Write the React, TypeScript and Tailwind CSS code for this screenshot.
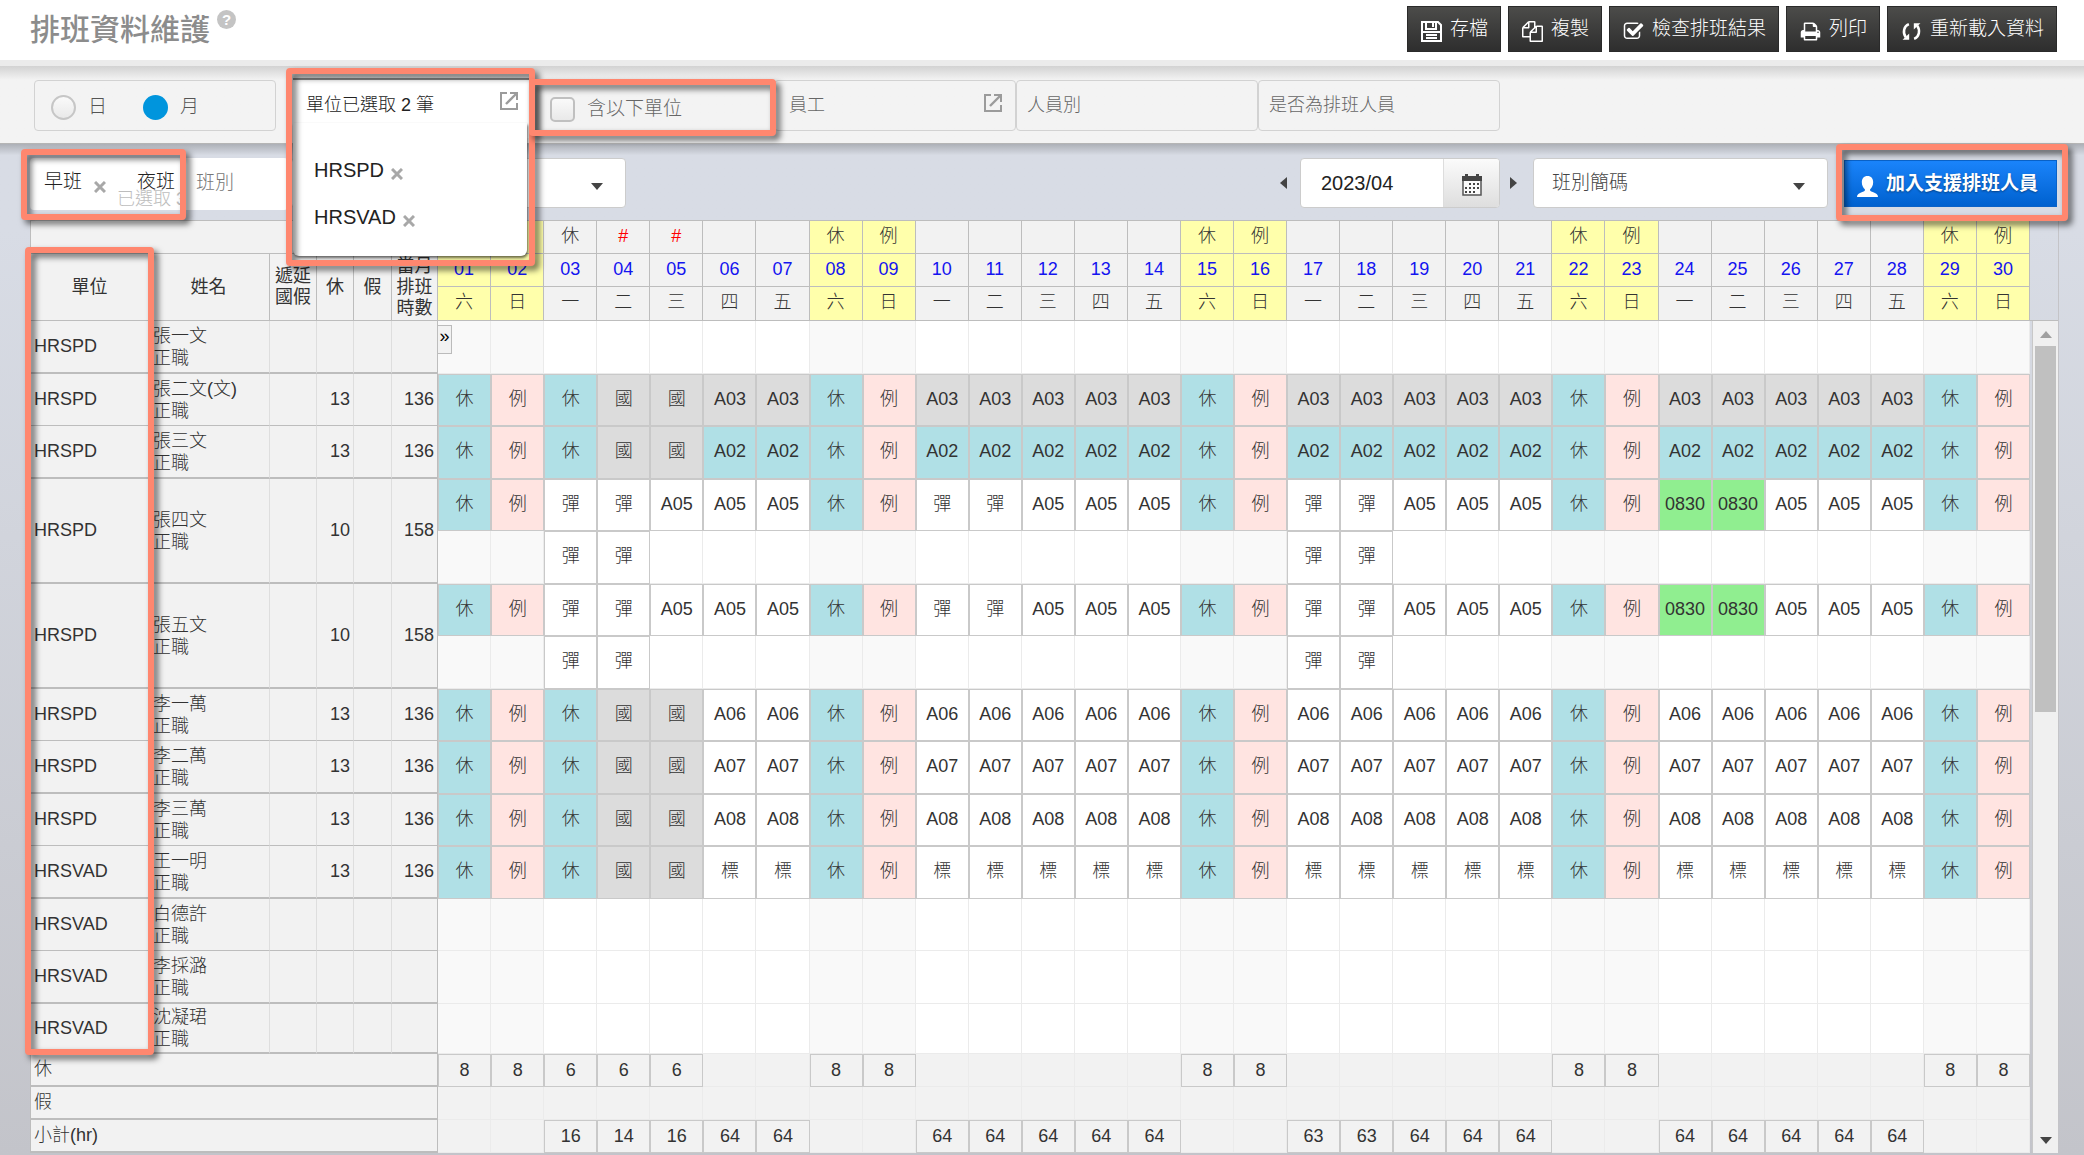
import React from 'react';

const DAYS = Array.from({ length: 30 }, (_, i) => i + 1);
const WEEK = ['六', '日', '一', '二', '三', '四', '五'];
const weekday = (d: number) => WEEK[(d - 1) % 7];
const isSat = (d: number) => weekday(d) === '六';
const isSun = (d: number) => weekday(d) === '日';
const isWeekend = (d: number) => isSat(d) || isSun(d);

const topLabel = (d: number) => {
  if (isSat(d) || d === 3) return '休';
  if (isSun(d)) return '例';
  if (d === 4 || d === 5) return '#';
  return '';
};

type Cell = { text: string; tone: string };

const TONES: Record<string, string> = {
  teal: 'bg-[#b0e0e6]',
  rose: 'bg-[#ffe4e1]',
  gray: 'bg-[#dcdcdc]',
  green: 'bg-[#90ee90]',
  white: 'bg-white',
};

type Person = {
  unit: string;
  name: string;
  off?: number;
  hours?: number;
  code?: string;
  tone?: string;
  flex?: boolean;
};

const PEOPLE: Person[] = [
  { unit: 'HRSPD', name: '張一文' },
  { unit: 'HRSPD', name: '張二文(文)', off: 13, hours: 136, code: 'A03', tone: 'gray' },
  { unit: 'HRSPD', name: '張三文', off: 13, hours: 136, code: 'A02', tone: 'teal' },
  { unit: 'HRSPD', name: '張四文', off: 10, hours: 158, code: 'A05', flex: true },
  { unit: 'HRSPD', name: '張五文', off: 10, hours: 158, code: 'A05', flex: true },
  { unit: 'HRSPD', name: '李一萬', off: 13, hours: 136, code: 'A06' },
  { unit: 'HRSPD', name: '李二萬', off: 13, hours: 136, code: 'A07' },
  { unit: 'HRSPD', name: '李三萬', off: 13, hours: 136, code: 'A08' },
  { unit: 'HRSVAD', name: '王一明', off: 13, hours: 136, code: '標' },
  { unit: 'HRSVAD', name: '白德許' },
  { unit: 'HRSVAD', name: '李採潞' },
  { unit: 'HRSVAD', name: '沈凝珺' },
];

function shiftOf(p: Person, d: number): Cell | null {
  if (!p.code) return null;
  if (isSat(d)) return { text: '休', tone: 'teal' };
  if (isSun(d)) return { text: '例', tone: 'rose' };
  if (p.flex) {
    if ([3, 4, 10, 11, 17, 18].includes(d)) return { text: '彈', tone: 'white' };
    if (d === 24 || d === 25) return { text: '0830', tone: 'green' };
    return { text: p.code, tone: 'white' };
  }
  if (d === 3) return { text: '休', tone: 'teal' };
  if (d === 4 || d === 5) return { text: '國', tone: 'gray' };
  return { text: p.code, tone: p.tone ?? 'white' };
}

const secondShift = (d: number): Cell | null =>
  [3, 4, 17, 18].includes(d) ? { text: '彈', tone: 'white' } : null;

const offTotal = (d: number) => (isWeekend(d) ? '8' : [3, 4, 5].includes(d) ? '6' : '');
const hourTotal = (d: number) => {
  if (isWeekend(d)) return '';
  if (d === 3 || d === 5) return '16';
  if (d === 4) return '14';
  if (d === 17 || d === 18) return '63';
  return '64';
};

function DayCell({ cell, day }: { cell: Cell | null; day: number }) {
  if (cell) {
    return (
      <td className={`border border-[#c9c9c9] px-0 pt-0 pb-0.5 text-center ${TONES[cell.tone]}`}>{cell.text}</td>
    );
  }
  return <td className={`border-r border-b border-[#ebebeb] p-0 ${isWeekend(day) ? 'bg-[#f9f9f9]' : 'bg-white'}`} />;
}

function Frame({ className }: { className: string }) {
  return (
    <span
      aria-hidden="true"
      className={`pointer-events-none absolute z-30 rounded-[4px] border-[6px] border-[#ff876f] drop-shadow-[4px_4px_3px_rgba(0,0,0,0.6)] ${className}`}
    />
  );
}

function Cross() {
  return (
    <svg viewBox="0 0 12 12" className="size-3" stroke="#a8a8a8" strokeWidth="3" aria-hidden="true">
      <path d="M1 1l10 10M11 1L1 11" />
    </svg>
  );
}

function OpenIcon() {
  return (
    <svg viewBox="0 0 20 20" className="size-5" fill="none" stroke="#9b9b9b" strokeWidth="2" aria-hidden="true">
      <path d="M8 2H2v16h16v-6M11 2h7v7" />
      <path d="M17 3L7 13" strokeWidth="2.4" />
    </svg>
  );
}

function Caret() {
  return (
    <svg viewBox="0 0 12 7" className="pointer-events-none absolute top-1/2 right-[23px] h-[7px] w-3" fill="#444" aria-hidden="true">
      <path d="M0 0h12L6 7z" />
    </svg>
  );
}

const COPY =
  'M1696 384q40 0 68 28t28 68v1216q0 40-28 68t-68 28h-960q-40 0-68-28t-28-68v-288h-544q-40 0-68-28t-28-68v-672q0-40 20-88t48-76l408-408q28-28 76-48t88-20h416q40 0 68 28t28 68v328q68-40 128-40h416zm-544 213l-299 299h299v-299zm-640-384l-299 299h299v-299zm196 647l316-316v-416h-384v416q0 40-28 68t-68 28h-416v640h512v-256q0-40 20-88t48-76zm956 804v-1152h-384v416q0 40-28 68t-68 28h-416v640h896z';
const CHECK =
  'M1472 930v318q0 119-84.500 203.500t-203.500 84.500h-832q-119 0-203.500-84.500t-84.500-203.500v-832q0-119 84.500-203.500t203.500-84.500h832q63 0 117 25 15 7 18 23 3 17-9 29l-49 49q-10 10-23 10-3 0-9-2-23-6-45-6h-832q-66 0-113 47t-47 113v832q0 66 47 113t113 47h832q66 0 113-47t47-113v-254q0-13 9-22l64-64q10-10 23-10 6 0 12 3 20 8 20 29zm231-489l-814 814q-24 24-57 24t-57-24l-430-430q-24-24-24-57t24-57l110-110q24-24 57-24t57 24l263 263 647-647q24-24 57-24t57 24l110 110q24 24 24 57t-24 57z';
const PRINT =
  'M448 1536h896v-256h-896v256zm0-640h896v-384h-160q-40 0-68-28t-28-68v-160h-640v640zm1152 64q0-26-19-45t-45-19-45 19-19 45 19 45 45 19 45-19 19-45zm128 0v416q0 13-9.500 22.500t-22.500 9.500h-224v160q0 40-28 68t-68 28h-960q-40 0-68-28t-28-68v-160h-224q-13 0-22.500-9.500t-9.500-22.500v-416q0-79 56.500-135.500t135.500-56.500h64v-544q0-40 28-68t68-28h672q40 0 88 20t76 48l152 152q28 28 48 76t20 88v256h64q79 0 135.500 56.500t56.500 135.500z';

const ACTIONS: { label: string; icon: React.ReactNode }[] = [
  {
    label: '存檔',
    icon: (
      <svg viewBox="0 0 21 21" className="size-[21px]" fill="none" stroke="#fff" strokeWidth="2" aria-hidden="true">
        <path d="M1 1h16l3 3v16H1z" />
        <path d="M5 1v7h10V1M12 2v4M1 11h19M5 14h11M5 17h11" />
      </svg>
    ),
  },
  {
    label: '複製',
    icon: (
      <svg viewBox="0 0 1792 1792" className="size-[21px]" fill="#fff" aria-hidden="true">
        <path d={COPY} />
      </svg>
    ),
  },
  {
    label: '檢查排班結果',
    icon: (
      <svg viewBox="0 0 1792 1792" className="size-[21px]" fill="#fff" aria-hidden="true">
        <path d={CHECK} />
      </svg>
    ),
  },
  {
    label: '列印',
    icon: (
      <svg viewBox="0 0 1792 1792" className="size-[21px]" fill="#fff" aria-hidden="true">
        <path d={PRINT} />
      </svg>
    ),
  },
  {
    label: '重新載入資料',
    icon: (
      <svg viewBox="0 0 20 20" className="size-[21px]" fill="none" stroke="#fff" strokeWidth="2.4" aria-hidden="true">
        <path d="M7.500 3C2.500 5 1.500 11 4.500 15.500" />
        <path d="M12.500 17C17.500 15 18.500 9 15.500 4.500" />
        <path d="M1.500 17.800h6.300v-6z" fill="#fff" stroke="none" />
        <path d="M18.500 2.200h-6.300v6z" fill="#fff" stroke="none" />
      </svg>
    ),
  },
];

function Filters() {
  const box = 'h-[51px] rounded-[4px] border border-[#d2d2d2]';
  return (
    <div className="flex h-[78px] items-start border-b border-[#b5b5b5] bg-[#f3f3f3] bg-linear-to-b from-[#d2d2d2] to-[#f3f3f3] to-18% pt-[14px] pl-[34px]">
      <div className={`${box} mr-[14px] flex w-[242px] items-center gap-9 pt-1 pl-4 text-[19px] text-[#555]`}>
        <label className="flex items-center gap-3">
          <input
            type="radio"
            name="range"
            className="size-[25px] appearance-none rounded-full border-2 border-[#c6c6c6] bg-linear-to-b from-[#fafafa] to-[#e9e9e9]"
          />
          日
        </label>
        <label className="flex items-center gap-3">
          <input type="radio" name="range" defaultChecked className="size-[25px] appearance-none rounded-full bg-[#0095dd]" />
          月
        </label>
      </div>

      <div className="relative z-20 h-[51px] w-[242px]">
        <div className="absolute -top-[2px] left-[3px] h-[60px] w-[236px] border-t-2 border-[#8a8a8a] bg-white pl-[13px]">
          <div className="flex h-[50px] items-center justify-between pr-[10px] text-[18px] text-[#222]">
            <span>單位已選取 2 筆</span>
            <button type="button" aria-label="選擇單位" className="mb-2">
              <OpenIcon />
            </button>
          </div>
        </div>
        <ul className="absolute top-[43px] left-[3px] h-[133px] w-[234px] rounded-b-[6px] bg-white pt-[23px] pl-[21px] text-[20px] text-[#222] shadow-[1px_2px_3px_rgba(0,0,0,0.6)]">
          {['HRSPD', 'HRSVAD'].map((u) => (
            <li key={u} className="flex h-[47px] items-center gap-[7px]">
              {u}
              <button type="button" aria-label={`移除 ${u}`} className="mt-2">
                <Cross />
              </button>
            </li>
          ))}
        </ul>
        <Frame className="-top-[12px] -left-[4px] h-[198px] w-[249px]" />
      </div>

      <div className="relative h-[51px] w-[242px]">
        <label className="flex h-full items-center gap-3 pt-2 pl-[18px] text-[19px] text-[#666]">
          <input
            type="checkbox"
            className="size-[25px] appearance-none rounded-[5px] border-2 border-[#c0c0c0] bg-linear-to-b from-[#fafafa] to-[#e9e9e9]"
          />
          含以下單位
        </label>
        <Frame className="-top-px -left-[3px] h-[57px] w-[247px]" />
      </div>

      <div className={`${box} flex w-[242px] justify-between pt-3 pr-3 pl-[14px] text-[18px] leading-6 text-[#666]`}>
        <span>員工</span>
        <button type="button" aria-label="選擇員工" className="h-5">
          <OpenIcon />
        </button>
      </div>
      <div className={`${box} w-[242px] pt-3 pl-[10px] text-[18px] leading-6 text-[#666]`}>人員別</div>
      <div className={`${box} w-[242px] pt-3 pl-[10px] text-[18px] leading-6 text-[#666]`}>是否為排班人員</div>
    </div>
  );
}

function Toolbar() {
  return (
    <div className="flex h-[76px] items-start bg-linear-to-b from-black/20 to-transparent to-15% pt-[14px] pr-[27px] pl-[30px]">
      <div className="relative flex h-[52px] w-[258px] rounded-[4px] bg-white">
        <div className="relative flex h-full w-[150px] shrink-0 pt-[11px] pl-[14px] text-[19px] leading-[26px] text-[#222]">
          <span className="whitespace-nowrap">早班</span>
          <button type="button" aria-label="移除 早班" className="mt-3 ml-3 h-3">
            <Cross />
          </button>
          <span className="ml-[31px] whitespace-nowrap">夜班</span>
          <span className="absolute top-[31px] left-[87px] text-[18px] leading-[20px] whitespace-nowrap text-[#bdbdbd]">已選取 3</span>
        </div>
        <span className="pt-3 pl-4 text-[19px] leading-[26px] text-[#777]">班別</span>
        <Frame className="-top-[9px] -left-[9px] h-[71px] w-[165px]" />
      </div>
      <div className="relative ml-[3px] h-[50px] w-[335px]">
        <select aria-label="班別選單" className="size-full appearance-none rounded-[4px] border border-[#ccc] bg-white">
          <option value="" />
        </select>
        <Caret />
      </div>

      <div className="ml-auto flex h-[50px] items-center">
        <button type="button" aria-label="上個月">
          <svg viewBox="0 0 7 12" className="h-3 w-[7px]" fill="#444" aria-hidden="true">
            <path d="M7 0v12L0 6z" />
          </svg>
        </button>
        <div className="ml-[13px] flex h-full w-[200px] overflow-hidden rounded-[4px] border border-[#ccc] bg-white">
          <input aria-label="年月" defaultValue="2023/04" className="w-[142px] pl-5 text-[20px] text-[#222]" />
          <button
            type="button"
            aria-label="開啟月曆"
            className="flex flex-1 items-center justify-center border-l border-[#ddd] bg-linear-to-b from-[#fbfbfb] to-[#dedede]"
          >
            <svg viewBox="0 0 20 22" className="mt-1 h-[22px] w-5" aria-hidden="true">
              <path d="M1 3h18v18H1z" fill="#fafafa" stroke="#555" strokeWidth="1.500" />
              <path d="M0 2h20v5H0zM3 0h3v3H3zM14 0h3v3h-3z" fill="#444" />
              <path d="M7 9h2v2H7zm4 0h2v2h-2zm4 0h2v2h-2zM3 13h2v2H3zm4 0h2v2H7zm4 0h2v2h-2zm4 0h2v2h-2zM3 17h2v2H3zm4 0h2v2H7zm4 0h2v2h-2z" fill="#444" />
            </svg>
          </button>
        </div>
        <button type="button" aria-label="下個月" className="ml-[10px]">
          <svg viewBox="0 0 7 12" className="h-3 w-[7px]" fill="#444" aria-hidden="true">
            <path d="M0 0v12l7-6z" />
          </svg>
        </button>
        <div className="relative ml-4 h-full w-[295px]">
          <select
            aria-label="班別簡碼"
            className="size-full appearance-none rounded-[4px] border border-[#ccc] bg-white pl-[18px] text-[19px] text-[#444]"
          >
            <option>班別簡碼</option>
          </select>
          <Caret />
        </div>
        <div className="relative ml-4 h-[47px] w-[213px]">
          <button
            type="button"
            className="flex size-full items-center gap-2 border border-[#0a62c8] bg-linear-to-b from-[#1a84fb] to-[#0061cf] pt-0.5 pl-3 text-[19px] font-bold whitespace-nowrap text-white [text-shadow:0_1px_2px_rgba(0,0,0,0.4)]"
          >
            <svg viewBox="0 0 20 20" className="mt-1 size-[21px] shrink-0" fill="#fff" aria-hidden="true">
              <path d="M10 0c3.600 0 5.400 2.400 5.400 6 0 3-1.200 5.200-2.900 6.500-.3 1.600.4 2 2.500 2.800 3.200 1.200 5 2 5 4.700H0c0-2.700 1.800-3.500 5-4.700 2.100-.8 2.800-1.200 2.500-2.800C5.800 11.200 4.600 9 4.600 6c0-3.600 1.800-6 5.400-6z" />
            </svg>
            加入支援排班人員
          </button>
          <Frame className="-top-[16px] -left-[8px] h-[77px] w-[232px]" />
        </div>
      </div>
    </div>
  );
}

const HEAD = 'border-r border-b border-[#bdbdbd] bg-[#f2f2f2] p-0 font-normal';
const dayHead = (d: number) =>
  isWeekend(d)
    ? 'border-r border-b border-[#bdbdbd] bg-[#ffffab] px-0 pt-0 pb-0.5 font-light'
    : 'border-r border-b border-[#bdbdbd] bg-[#f2f2f2] px-0 pt-0 pb-0.5 font-light';

function Roster() {
  return (
    <table className="w-full min-w-0 flex-1 table-fixed border-separate border-spacing-0 border-t border-l border-[#bdbdbd] text-[18px] leading-[21px] text-[#333]">
      <colgroup>
        <col className="w-[117px]" />
        <col className="w-[122px]" />
        <col className="w-[47px]" />
        <col className="w-[37px]" />
        <col className="w-[38px]" />
        <col className="w-[46px]" />
        {DAYS.map((d) => (
          <col key={d} />
        ))}
      </colgroup>
      <thead>
        <tr className="h-[33px]">
          <td colSpan={6} className={HEAD} />
          {DAYS.map((d) => (
            <th key={d} className={`${dayHead(d)} ${d === 4 || d === 5 ? 'text-[#f00]' : ''}`}>
              {topLabel(d)}
            </th>
          ))}
        </tr>
        <tr className="h-[33px]">
          <th rowSpan={2} className="border-b border-[#bdbdbd] bg-[#f2f2f2] p-0 font-normal">單位</th>
          <th rowSpan={2} className={HEAD}>姓名</th>
          <th rowSpan={2} className={HEAD}>遞延<br />國假</th>
          <th rowSpan={2} className={HEAD}>休</th>
          <th rowSpan={2} className={HEAD}>假</th>
          <th rowSpan={2} className={HEAD}>當月<br />排班<br />時數</th>
          {DAYS.map((d) => (
            <th key={d} className={`${dayHead(d)} text-[#1414f0]`}>
              {String(d).padStart(2, '0')}
            </th>
          ))}
        </tr>
        <tr className="h-[34px]">
          {DAYS.map((d) => (
            <th key={d} className={dayHead(d)}>
              {weekday(d)}
            </th>
          ))}
        </tr>
      </thead>
      <tbody>
        {PEOPLE.map((p, i) => {
          const span = p.flex ? 2 : 1;
          const last = i === PEOPLE.length - 1;
          const tall = i % 2 === 0 && !p.flex;
          const edge =
            tall || p.flex || last
              ? 'border-b-2 border-b-[#bdbdbd] bg-[#f2f2f2] py-0'
              : 'border-b border-b-[#bdbdbd] bg-[#f2f2f2] py-0';
          const side = 'border-r border-r-[#dedede]';
          return (
            <React.Fragment key={p.name}>
              <tr className={last ? 'h-[50px]' : tall ? 'h-[53px]' : 'h-[52px]'}>
                <td rowSpan={span} className={`${edge} pl-[3px]`}>{p.unit}</td>
                <td rowSpan={span} className={`${edge} ${side} pl-[5px] leading-[22px] whitespace-nowrap`}>
                  {p.name}
                  <br />
                  正職
                </td>
                <td rowSpan={span} className={`${edge} ${side}`} />
                <td rowSpan={span} className={`${edge} ${side} pr-[3px] text-right`}>{p.off}</td>
                <td rowSpan={span} className={`${edge} ${side}`} />
                <td rowSpan={span} className={`${edge} border-r border-r-[#bdbdbd] pr-[3px] text-right`}>{p.hours}</td>
                {DAYS.map((d) =>
                  i === 0 && d === 1 ? (
                    <td key={d} className="border-r border-b border-[#ebebeb] bg-[#f9f9f9] p-0 align-top">
                      <button
                        type="button"
                        aria-label="展開欄位"
                        className="mt-1 block h-[29px] w-[14px] border border-l-0 border-[#bbb] bg-[#f2f2f2] pb-2 text-center leading-4 text-black"
                      >
                        »
                      </button>
                    </td>
                  ) : (
                    <DayCell key={d} day={d} cell={shiftOf(p, d)} />
                  ),
                )}
              </tr>
              {p.flex && (
                <tr className="h-[53px]">
                  {DAYS.map((d) => (
                    <DayCell key={d} day={d} cell={secondShift(d)} />
                  ))}
                </tr>
              )}
            </React.Fragment>
          );
        })}
      </tbody>
      <tfoot>
        {[
          { label: '休', value: offTotal },
          { label: '假', value: () => '' },
          { label: '小計(hr)', value: hourTotal },
        ].map((r) => (
          <tr key={r.label} className="h-[33px]">
            <th
              colSpan={6}
              className="border-r border-b-2 border-[#bdbdbd] bg-[#f2f2f2] py-0 pr-0 pl-[3px] text-left font-light"
            >
              {r.label}
            </th>
            {DAYS.map((d) => {
              const v = r.value(d);
              return v ? (
                <td key={d} className="border border-[#c9c9c9] bg-[#f2f2f2] p-0 text-center">{v}</td>
              ) : (
                <td key={d} className="border-r border-b border-[#ebebeb] bg-[#f2f2f2] p-0" />
              );
            })}
          </tr>
        ))}
      </tfoot>
    </table>
  );
}

export default function App() {
  return (
    <div className="min-h-screen bg-[#d6dae3] bg-linear-to-b from-[#d8dce5] from-20% to-[#c3c4ca] font-['Liberation_Sans','Noto_Sans_CJK_TC',sans-serif] font-light">
      <header className="flex h-[66px] items-start justify-between border-b-[6px] border-[#ebebeb] bg-white pr-[27px] pl-[30px]">
        <h1 className="flex items-start pt-[9px] text-[30px] leading-[42px] font-medium text-[#8c8c8c]">
          排班資料維護
          <button
            type="button"
            aria-label="說明"
            className="mt-px ml-[7px] size-[19px] rounded-full bg-[#c4c4c4] text-[15px] leading-[19px] font-bold text-white"
          >
            ?
          </button>
        </h1>
        <div className="flex gap-[7px] pt-[6px]">
          {ACTIONS.map((a) => (
            <button
              key={a.label}
              type="button"
              className="flex h-[46px] items-center gap-2 border border-[#2a2a2a] bg-linear-to-b from-[#4c4c4a] to-[#2e2e2e] pr-3 pl-[13px] text-[19px] whitespace-nowrap text-white"
            >
              <span className="mt-1">{a.icon}</span>
              {a.label}
            </button>
          ))}
        </div>
      </header>
      <Filters />
      <Toolbar />
      <main className="relative mr-[25px] ml-[30px] flex border-r border-[#c4c4c8]">
        <Roster />
        <div className="flex w-[28px] shrink-0 flex-col" aria-hidden="true">
          <div className="h-[101px] border-b border-[#bdbdbd]" />
          <div className="ml-[2px] flex flex-1 flex-col items-center border-l border-[#c8c8c8] bg-[#f0f0f0]">
            <svg viewBox="0 0 12 7" className="mt-[10px] h-[7px] w-3" fill="#a0a0a0">
              <path d="M0 7h12L6 0z" />
            </svg>
            <div className="mt-[8px] h-[366px] w-[21px] bg-[#c0c0c0]" />
            <svg viewBox="0 0 12 7" className="mt-auto mb-[9px] h-[7px] w-3" fill="#444">
              <path d="M0 0h12L6 7z" />
            </svg>
          </div>
        </div>
        <Frame className="top-[27px] bottom-[98px] -left-[5px] w-[129px]" />
      </main>
    </div>
  );
}
